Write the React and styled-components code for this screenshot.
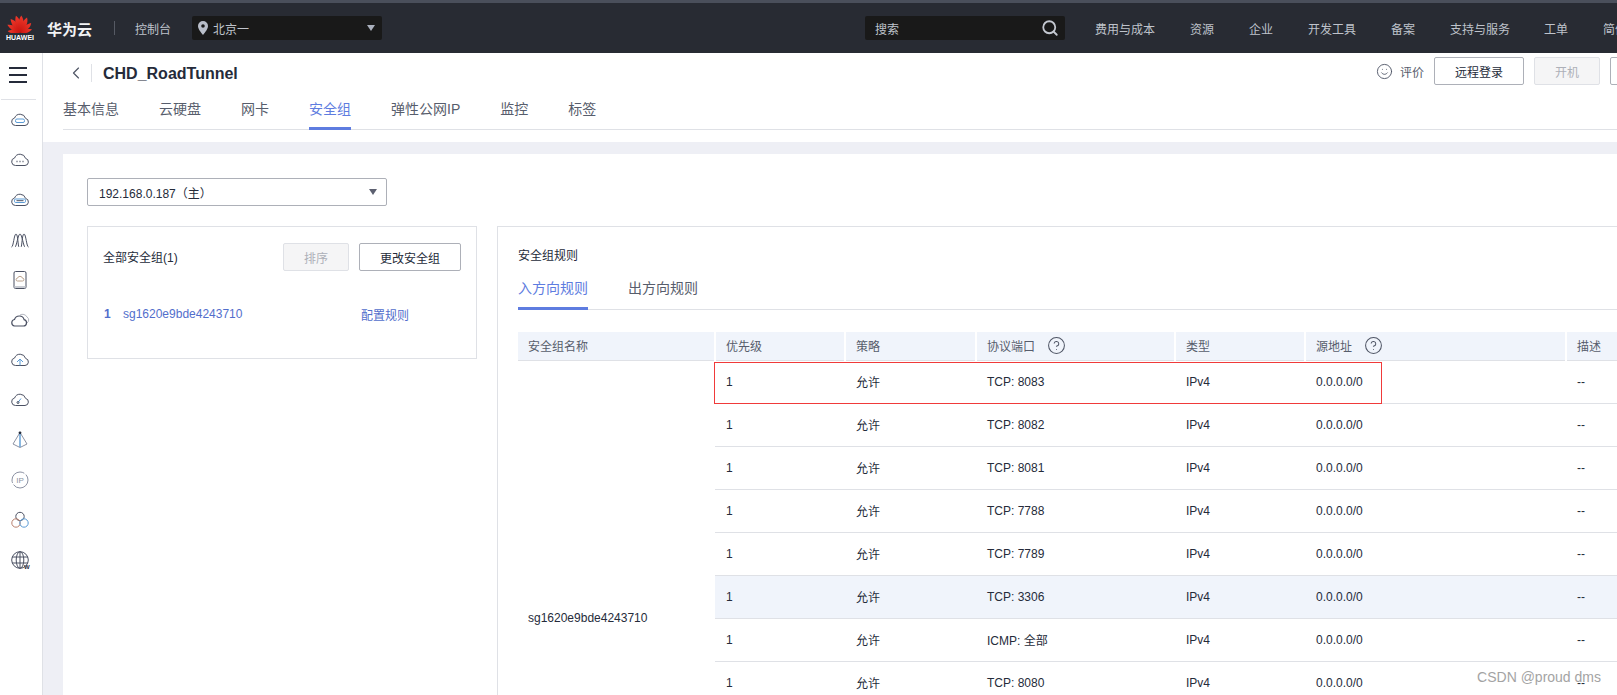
import React from "react";
import styled, { createGlobalStyle } from "styled-components";
import { CircleHelp, Search, Smile, ChevronLeft } from "lucide-react";

const font = `"Liberation Sans", "Noto Sans CJK SC", sans-serif`;

const navItems = [
  ["费用与成本", 61],
  ["资源", 25],
  ["企业", 25],
  ["开发工具", 49],
  ["备案", 25],
  ["支持与服务", 60],
  ["工单", 25],
  ["简体", 25]
];

const pageTabs = ["基本信息", "云硬盘", "网卡", "安全组", "弹性公网IP", "监控", "标签"];

const rules = [
  ["TCP: 8083"],
  ["TCP: 8082"],
  ["TCP: 8081"],
  ["TCP: 7788"],
  ["TCP: 7789"],
  ["TCP: 3306", true],
  ["ICMP: 全部"],
  ["TCP: 8080"],
  ["TCP: 8079"],
  ["TCP: 8078"],
  ["TCP: 443"],
  ["TCP: 22"]
];

const CLOUD = "M5.5 15.5h9.5a3.6 3.6 0 0 0 .6-7.1 5.8 5.8 0 0 0-11-.4 3.8 3.8 0 0 0 .9 7.5z";

function HuaweiLogo() {
  const petals = [
    [-80, 0.72],
    [-54, 0.86],
    [-30, 0.96],
    [-9, 1],
    [9, 1],
    [30, 0.96],
    [54, 0.86],
    [80, 0.72]
  ];
  return (
    <svg width="26" height="18" viewBox="0 0 26 18">
      <defs>
        <linearGradient id="petal" x1="0" y1="0" x2="0" y2="1">
          <stop offset="0" stopColor="#f0392b" />
          <stop offset="1" stopColor="#c8140f" />
        </linearGradient>
      </defs>
      {petals.map(([angle, size]) => (
        <path
          key={angle}
          d="M13 17.5C9.2 12.5 9.2 5.500 11.600.4 16 4.500 16.200 12.500 13 17.500z"
          fill="url(#petal)"
          transform={`rotate(${angle} 13 17.5) translate(13 17.5) scale(${size}) translate(-13 -17.5)`}
        />
      ))}
    </svg>
  );
}

function NavIcon({ kind }) {
  const line = "#4b5163";
  const blue = "#5b9bd5";
  return (
    <IconSvg viewBox="0 0 20 20">
      {kind === "ecs" && (
        <>
          <path d={CLOUD} stroke={line} />
          <rect x="5.5" y="9" width="9" height="3.5" rx="1.5" stroke={blue} />
        </>
      )}
      {kind === "dots" && (
        <>
          <path d={CLOUD} stroke={line} />
          <path d="M6.5 11.5h1M9.5 11.5h1M12.5 11.5h1" stroke={line} strokeWidth="1.3" />
        </>
      )}
      {kind === "disk" && (
        <>
          <path d={CLOUD} stroke={line} />
          <rect x="4.5" y="9" width="11" height="3.5" rx="1.2" stroke={blue} />
          <path d="M6.5 10.7h7" stroke={line} />
        </>
      )}
      {kind === "waves" && (
        <path
          d="M1.5 17C3.5 17 4 4 6 4s2 13 3 13M5 17C6.500 17 8 4 10 4s3.500 13 5 13M11 17c1 0 1-13 3-13s2.500 13 4.500 13"
          stroke={line}
        />
      )}
      {kind === "phone" && (
        <>
          <rect x="4" y="1.5" width="12" height="17" rx="1.5" stroke={line} />
          <path d="M4.5 16h11v2h-11z" fill="#c9ccd3" />
          <path d="M7.5 11h5a1.4 1.4 0 0 0 0-2.800 2.600 2.600 0 0 0-5 0 1.400 1.400 0 0 0 0 2.800z" stroke="#b9a08a" />
        </>
      )}
      {kind === "stack" && (
        <>
          <path d="M10 5a5 5 0 0 1 7 2 3.500 3.500 0 0 1 0 6" stroke="#b5b8c1" />
          <path d="M4.500 16h9a3.200 3.200 0 0 0 .6-6.300 5 5 0 0 0-9.600-.2 3.300 3.300 0 0 0 0 6.500z" stroke={line} strokeWidth="1.2" />
        </>
      )}
      {kind === "upload" && (
        <>
          <path d={CLOUD} stroke={line} />
          <path d="M10 15.500V10M7 12l3-3 3 3" stroke={blue} />
        </>
      )}
      {kind === "gauge" && (
        <>
          <path d={CLOUD} stroke={line} />
          <path d="M8 12.500l3-4" stroke={blue} />
          <circle cx="8" cy="12.500" r="1" stroke={line} />
        </>
      )}
      {kind === "cone" && (
        <>
          <path d="M10 2.500L17 14l-7 3.500L3 14z" stroke="#8c92a3" />
          <path d="M10 3v14" stroke={blue} strokeWidth="1.4" />
          <circle cx="10" cy="2.800" r="1.400" fill="#252b3a" />
        </>
      )}
      {kind === "ip" && (
        <>
          <circle cx="10" cy="10" r="8" stroke="#8c92a3" strokeDasharray="20 2" />
          <text x="10" y="13" textAnchor="middle" fontSize="8" fontFamily="Liberation Sans" fill="#8c92a3">
            IP
          </text>
        </>
      )}
      {kind === "trio" && (
        <>
          <circle cx="10" cy="6.500" r="4.200" stroke={line} />
          <circle cx="6" cy="13" r="4.200" stroke="#b9806e" />
          <circle cx="14" cy="13" r="4.200" stroke={blue} />
        </>
      )}
      {kind === "globe" && (
        <>
          <circle cx="10" cy="10" r="8.300" stroke={line} />
          <ellipse cx="10" cy="10" rx="3.800" ry="8.300" stroke={line} />
          <path d="M2 7h16M2 13h16M10 2v16" stroke={line} />
          <text x="14" y="19" fontSize="6" fontWeight="700" fontFamily="Liberation Sans" fill="#252b3a">
            W
          </text>
        </>
      )}
    </IconSvg>
  );
}

const sideIcons = ["ecs", "dots", "disk", "waves", "phone", "stack", "upload", "gauge", "cone", "ip", "trio", "globe"];

function Help() {
  return <CircleHelp size={19} strokeWidth={1.3} color="#4f5565" />;
}

export default function App() {
  return (
    <Page>
      <GlobalStyle />
      <TopStrip />
      <Header>
        <Logo>
          <HuaweiLogo />
          <LogoText>HUAWEI</LogoText>
        </Logo>
        <Brand>华为云</Brand>
        <HeaderDivider />
        <Console>控制台</Console>
        <RegionSelect>
          <svg width="10" height="14" viewBox="0 0 10 14">
            <path
              fillRule="evenodd"
              d="M5 0a5 5 0 0 1 5 5c0 3-3 6.500-5 9-2-2.500-5-6-5-9a5 5 0 0 1 5-5zm0 3.200a1.800 1.800 0 1 0 0 3.600 1.800 1.800 0 0 0 0-3.600z"
              fill="#b9bec9"
            />
          </svg>
          <RegionText>北京一</RegionText>
          <HeaderCaret />
        </RegionSelect>
        <SearchBox>
          <span>搜索</span>
          <Search size={18} strokeWidth={2.4} color="#c4c8d0" />
        </SearchBox>
        <Nav>
          {navItems.map(([label, width]) => (
            <NavLink key={label} $width={width}>
              {label}
            </NavLink>
          ))}
        </Nav>
      </Header>
      <Body>
        <Sidebar>
          <MenuButton>
            <MenuBar />
            <MenuBar />
            <MenuBar />
          </MenuButton>
          <SideList>
            {sideIcons.map((kind) => (
              <SideItem key={kind}>
                <NavIcon kind={kind} />
              </SideItem>
            ))}
          </SideList>
        </Sidebar>
        <Main>
          <PageHead>
            <TitleRow>
              <BackLink>
                <ChevronLeft size={20} strokeWidth={1.4} color="#4f5565" />
              </BackLink>
              <Title>CHD_RoadTunnel</Title>
              <Actions>
                <Smile size={17} strokeWidth={1.3} color="#4f5565" />
                <RateText>评价</RateText>
                <Button $width={90}>远程登录</Button>
                <Button $width={66} disabled>
                  开机
                </Button>
                <Button $width={66}>关机</Button>
              </Actions>
            </TitleRow>
            <PageTabs>
              {pageTabs.map((tab) => (
                <PageTab key={tab} $active={tab === "安全组"}>
                  {tab}
                </PageTab>
              ))}
            </PageTabs>
          </PageHead>
          <Content>
            <Card>
              <IpSelect>
                <span>192.168.0.187（主）</span>
                <SelectCaret />
              </IpSelect>
              <Columns>
                <GroupPanel>
                  <GroupHead>
                    <GroupTitle>全部安全组(1)</GroupTitle>
                    <Button $width={66} disabled>
                      排序
                    </Button>
                    <Button $width={102}>更改安全组</Button>
                  </GroupHead>
                  <GroupRow>
                    <GroupIndex>1</GroupIndex>
                    <GroupName>sg1620e9bde4243710</GroupName>
                    <ConfigLink>配置规则</ConfigLink>
                  </GroupRow>
                </GroupPanel>
                <RulesPanel>
                  <RulesTitle>安全组规则</RulesTitle>
                  <RuleTabs>
                    <RuleTab $active>入方向规则</RuleTab>
                    <RuleTab>出方向规则</RuleTab>
                  </RuleTabs>
                  <TableWrap>
                    <RedBox />
                    <Table>
                      <colgroup>
                        <col width="197" />
                        <col width="130" />
                        <col width="131" />
                        <col width="199" />
                        <col width="130" />
                        <col width="261" />
                        <col width="120" />
                      </colgroup>
                      <thead>
                        <tr>
                          <Th>安全组名称</Th>
                          <Th>优先级</Th>
                          <Th>策略</Th>
                          <Th>
                            <ThInner>
                              协议端口
                              <Help />
                            </ThInner>
                          </Th>
                          <Th>类型</Th>
                          <Th>
                            <ThInner>
                              源地址
                              <Help />
                            </ThInner>
                          </Th>
                          <Th>描述</Th>
                        </tr>
                      </thead>
                      <tbody>
                        {rules.map(([port, hot], i) => (
                          <Row key={port} $hot={hot}>
                            {i === 0 && <NameCell rowSpan={rules.length}>sg1620e9bde4243710</NameCell>}
                            <Td>1</Td>
                            <Td>允许</Td>
                            <Td>{port}</Td>
                            <Td>IPv4</Td>
                            <Td>0.0.0.0/0</Td>
                            <Td>--</Td>
                          </Row>
                        ))}
                      </tbody>
                    </Table>
                  </TableWrap>
                </RulesPanel>
              </Columns>
            </Card>
          </Content>
        </Main>
      </Body>
      <Watermark>CSDN @proud dms</Watermark>
    </Page>
  );
}

const GlobalStyle = createGlobalStyle`
  html, body {
    margin: 0;
    padding: 0;
    background: #fff;
    font-family: ${font};
  }
  * {
    box-sizing: border-box;
  }
`;

const Page = styled.div`
  position: relative;
  display: flex;
  flex-direction: column;
  width: 100vw;
  height: 100vh;
  overflow: hidden;
  font-size: 12px;
  color: #252b3a;
`;

const TopStrip = styled.div`
  flex: none;
  height: 3px;
  background: #4a4f5b;
`;

const Header = styled.header`
  flex: none;
  display: flex;
  align-items: center;
  height: 50px;
  padding-left: 7px;
  background: #282b33;
  color: #bfc3cb;
  white-space: nowrap;
  overflow: hidden;
`;

const Logo = styled.div`
  flex: none;
  display: flex;
  flex-direction: column;
  align-items: center;
  width: 26px;
  line-height: 8px;
`;

const LogoText = styled.span`
  margin-top: 1px;
  font-size: 7px;
  font-weight: 700;
  color: #fff;
`;

const Brand = styled.span`
  flex: none;
  margin-left: 14px;
  font-size: 15px;
  font-weight: 700;
  color: #f2f3f5;
`;

const HeaderDivider = styled.span`
  flex: none;
  width: 1px;
  height: 14px;
  margin: 0 20px 0 22px;
  background: #565a64;
`;

const Console = styled.span`
  flex: none;
  width: 36px;
`;

const DarkField = styled.div`
  flex: none;
  display: flex;
  align-items: center;
  height: 24px;
  background: #191919;
  border-radius: 2px;
`;

const RegionSelect = styled(DarkField)`
  width: 190px;
  margin-left: 21px;
  padding: 0 5px 0 6px;
`;

const RegionText = styled.span`
  margin-left: 5px;
  flex: 1;
`;

const HeaderCaret = styled.span`
  width: 0;
  height: 0;
  margin-right: 2px;
  border-left: 4px solid transparent;
  border-right: 4px solid transparent;
  border-top: 6px solid #aab0bd;
`;

const SearchBox = styled(DarkField)`
  justify-content: space-between;
  width: 200px;
  margin-left: 483px;
  padding: 0 6px 0 10px;
`;

const Nav = styled.nav`
  flex: none;
  display: flex;
  gap: 34px;
  margin-left: 30px;
`;

const NavLink = styled.span`
  flex: none;
  width: ${(props) => props.$width}px;
`;

const Body = styled.div`
  flex: 1;
  display: flex;
  min-height: 0;
`;

const Sidebar = styled.aside`
  flex: none;
  width: 43px;
  background: #fff;
  border-right: 1px solid #dfe1e6;
`;

const MenuButton = styled.div`
  display: flex;
  flex-direction: column;
  justify-content: space-between;
  width: 18px;
  height: 16px;
  margin: 14px 0 0 9px;
`;

const MenuBar = styled.span`
  height: 2px;
  background: #252b3a;
`;

const SideList = styled.div`
  margin: 16px 0 0 1px;
  border-top: 1px solid #dfe1e6;
  width: 35px;
`;

const SideItem = styled.div`
  display: flex;
  align-items: center;
  justify-content: center;
  width: 38px;
  height: 40px;
`;

const IconSvg = styled.svg`
  width: 20px;
  height: 20px;
  fill: none;
  stroke-width: 1;
  overflow: visible;
`;

const Main = styled.main`
  flex: 1;
  display: flex;
  flex-direction: column;
  min-width: 0;
`;

const PageHead = styled.div`
  flex: none;
  height: 89px;
  padding-left: 20px;
  background: #fff;
`;

const TitleRow = styled.div`
  display: flex;
  align-items: center;
  height: 38px;
  padding-top: 4px;
`;

const BackLink = styled.span`
  display: flex;
  align-items: center;
  width: 29px;
  height: 18px;
  padding-left: 3px;
  margin-top: -3px;
  border-right: 1px solid #dfe1e6;
`;

const Title = styled.h1`
  margin: 0 0 0 11px;
  font-size: 16px;
  font-weight: 700;
  line-height: 20px;
  color: #252b3a;
`;

const Actions = styled.div`
  flex: none;
  display: flex;
  align-items: center;
  width: 241px;
  margin: 0 0 6px auto;
  white-space: nowrap;

  svg {
    flex: none;
  }
`;

const RateText = styled.span`
  flex: none;
  margin: 0 10px 0 7px;
  color: #575d6c;
`;

const Button = styled.button`
  flex: none;
  width: ${(props) => props.$width}px;
  height: 28px;
  margin-right: 10px;
  padding: 0;
  font: inherit;
  font-size: 12px;
  color: ${(props) => (props.disabled ? "#adb0b8" : "#252b3a")};
  background: ${(props) => (props.disabled ? "#f5f5f6" : "#fff")};
  border: 1px solid ${(props) => (props.disabled ? "#dfe1e6" : "#adb0b8")};
  border-radius: 2px;
`;

const PageTabs = styled.div`
  display: flex;
  gap: 40px;
  height: 39px;
  border-bottom: 1px solid #dfe1e6;
`;

const PageTab = styled.span`
  display: flex;
  align-items: center;
  height: 39px;
  padding-bottom: 3px;
  font-size: 14px;
  color: ${(props) => (props.$active ? "#5e7ce0" : "#575d6c")};
  border-bottom: 3px solid ${(props) => (props.$active ? "#5e7ce0" : "transparent")};
  white-space: nowrap;
`;

const Content = styled.div`
  flex: 1;
  min-height: 0;
  padding: 12px 0 0 20px;
  background: #eeeff5;
`;

const Card = styled.div`
  height: 100%;
  padding: 24px 0 0 24px;
  background: #fff;
`;

const IpSelect = styled.div`
  display: flex;
  align-items: center;
  justify-content: space-between;
  width: 300px;
  height: 28px;
  padding: 0 9px 0 11px;
  border: 1px solid #adb0b8;
  border-radius: 2px;
`;

const SelectCaret = styled.span`
  width: 0;
  height: 0;
  border-left: 4px solid transparent;
  border-right: 4px solid transparent;
  border-top: 6px solid #5c6070;
`;

const Columns = styled.div`
  display: flex;
  align-items: flex-start;
  gap: 20px;
  margin-top: 20px;
`;

const GroupPanel = styled.section`
  flex: none;
  width: 390px;
  height: 133px;
  padding: 16px 0 0 15px;
  border: 1px solid #dfe1e6;
`;

const GroupHead = styled.div`
  display: flex;
  align-items: center;
`;

const GroupTitle = styled.span`
  width: 180px;
  margin-bottom: 2px;
`;

const GroupRow = styled.div`
  display: flex;
  align-items: center;
  margin-top: 33px;
`;

const GroupIndex = styled.span`
  width: 20px;
  padding-left: 1px;
  font-weight: 700;
  color: #526ecc;
`;

const GroupName = styled.span`
  width: 238px;
  color: #526ecc;
`;

const ConfigLink = styled.span`
  margin-top: 2px;
  color: #526ecc;
`;

const RulesPanel = styled.section`
  flex: none;
  width: 1260px;
  height: 600px;
  padding: 20px 0 0 20px;
  border: 1px solid #dfe1e6;
`;

const RulesTitle = styled.div`
  line-height: 18px;
`;

const RuleTabs = styled.div`
  display: flex;
  gap: 40px;
  height: 42px;
  margin-top: 3px;
  border-bottom: 1px solid #dfe1e6;
`;

const RuleTab = styled.span`
  display: flex;
  align-items: center;
  height: 42px;
  padding-bottom: 1px;
  font-size: 14px;
  color: ${(props) => (props.$active ? "#5e7ce0" : "#575d6c")};
  border-bottom: 3px solid ${(props) => (props.$active ? "#5e7ce0" : "transparent")};
`;

const TableWrap = styled.div`
  position: relative;
  margin-top: 22px;
`;

const RedBox = styled.div`
  position: absolute;
  top: 30px;
  left: 196px;
  width: 668px;
  height: 42px;
  border: 1px solid #f03a3a;
  pointer-events: none;
`;

const Table = styled.table`
  width: 1168px;
  table-layout: fixed;
  border-collapse: collapse;
`;

const Th = styled.th`
  height: 28px;
  padding: 0 10px;
  font-weight: 400;
  text-align: left;
  color: #575d6c;
  background: #f0f4fb;
  border-right: 2px solid #fff;
  border-bottom: 1px solid #dfe1e6;
`;

const ThInner = styled.span`
  display: inline-flex;
  align-items: center;
  gap: 12px;
  height: 17px;
`;

const Row = styled.tr`
  height: 43px;
  background: ${(props) => (props.$hot ? "#f0f4fb" : "transparent")};
`;

const Td = styled.td`
  padding: 0 10px 0 11px;
  border-bottom: 1px solid #dfe1e6;
`;

const NameCell = styled.td`
  padding: 0 10px;
  background: #fff;
  vertical-align: middle;
`;

const Watermark = styled.div`
  position: absolute;
  right: 16px;
  bottom: 9px;
  font-size: 14px;
  line-height: 18px;
  color: #9a9a9a;
  opacity: 0.9;
`;
